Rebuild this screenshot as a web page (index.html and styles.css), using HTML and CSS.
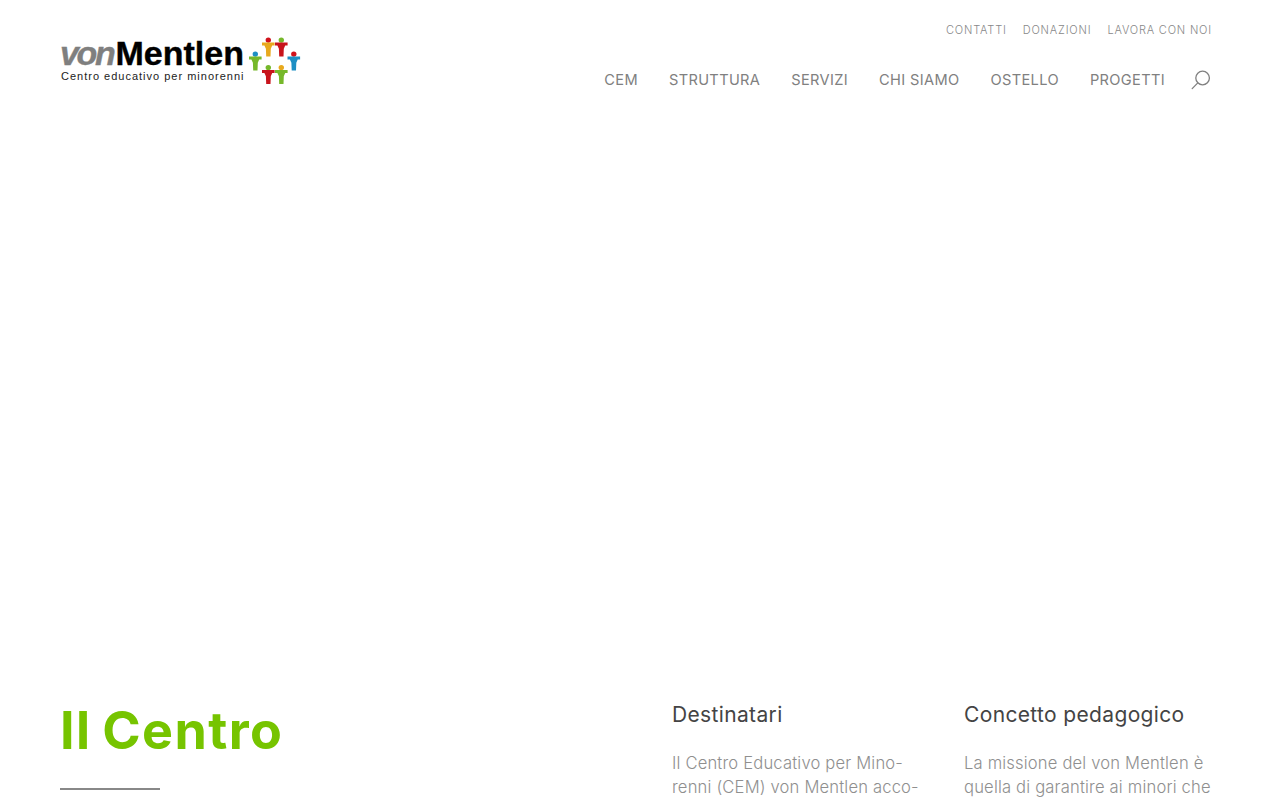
FILE: index.html
```html
<!DOCTYPE html>
<html lang="it">

<head>
    <meta charset="utf-8">
    <title>Centro educativo per minorenni von Mentlen</title>
    <link rel="stylesheet" href="styles.css">
</head>

<body>
    <header class="site-header">
        <a class="logo" href="#">
            <span class="logo-text">
                <span class="logo-name"><span class="logo-von">von</span>Mentlen</span>
                <span class="logo-caption">Centro educativo per minorenni</span>
            </span>
            <svg class="logo-mark" width="52" height="48" viewBox="0 0 52 48">
                <defs>
                    <path id="body" d="M0 5h12.6v3H10.2L8.8 11.2 8.5 19H4.2L3.9 11.2 2.4 8H0z" />
                </defs>
                <g transform="translate(13 1.5)">
                    <circle cx="6.3" cy="2.6" r="2.7" fill="#d0121b" />
                    <use href="#body" fill="#e8a91d" />
                </g>
                <g transform="translate(26 1.5)">
                    <circle cx="6.3" cy="2.6" r="2.7" fill="#76b82a" />
                    <use href="#body" fill="#c8141c" />
                </g>
                <g transform="translate(0 15.5)">
                    <circle cx="6.3" cy="2.6" r="2.7" fill="#1d8fc4" />
                    <use href="#body" fill="#76b82a" />
                </g>
                <g transform="translate(38.5 15.5)">
                    <circle cx="6.3" cy="2.6" r="2.7" fill="#d0121b" />
                    <use href="#body" fill="#1d8fc4" />
                </g>
                <g transform="translate(13 29)">
                    <circle cx="6.3" cy="2.6" r="2.7" fill="#76b82a" />
                    <use href="#body" fill="#c8141c" />
                </g>
                <g transform="translate(26 29)">
                    <circle cx="6.3" cy="2.6" r="2.7" fill="#e8a91d" />
                    <use href="#body" fill="#76b82a" />
                </g>
            </svg>
        </a>

        <div class="header-menus">
            <nav class="top-nav">
                <a href="#">CONTATTI</a>
                <a href="#">DONAZIONI</a>
                <a href="#">LAVORA CON NOI</a>
            </nav>
            <nav class="main-nav">
                <a href="#">CEM</a>
                <a href="#">STRUTTURA</a>
                <a href="#">SERVIZI</a>
                <a href="#">CHI SIAMO</a>
                <a href="#">OSTELLO</a>
                <a href="#">PROGETTI</a>
                <svg class="search-icon" width="20" height="20" viewBox="0 0 20 20" fill="none" stroke="currentColor"
                    stroke-width="1.3" stroke-linecap="round">
                    <circle cx="11.6" cy="8" r="6.8" />
                    <path d="M6.8 12.9L1.2 18.6" />
                </svg>
            </nav>
        </div>
    </header>

    <main class="intro">
        <div class="intro-title">
            <h1>Il Centro</h1>
            <div class="title-rule"></div>
        </div>
        <section class="intro-col">
            <h3>Destinatari</h3>
            <p>Il Centro Educativo per Mino-<br>renni (CEM) von Mentlen acco-</p>
        </section>
        <section class="intro-col">
            <h3>Concetto pedagogico</h3>
            <p>La missione del von Mentlen è<br>quella di garantire ai minori che</p>
        </section>
    </main>
</body>

</html>
```

FILE: styles.css
```css
html,
body {
    height: 800px;
    overflow: hidden;
}

body {
    font-family: Inter, "Open Sans", sans-serif;
    margin: 0;
    background-color: white;
    color: #808080;
}

a {
    color: inherit;
    text-decoration: none;
}

.site-header {
    display: flex;
    justify-content: space-between;
    height: 674px;
    padding: 0 68px 0 60px;
}

.logo {
    display: flex;
    align-items: flex-start;
    gap: 5px;
    margin-top: 36px;
}

.logo-text {
    display: flex;
    flex-direction: column;
    width: 184px;
    font-family: "Liberation Sans", Arial, sans-serif;
}

.logo-name {
    margin-top: 1px;
    color: black;
    font-size: 34px;
    font-weight: bold;
    line-height: 33px;
    -webkit-text-stroke: 0.4px currentColor;
}

.logo-von {
    color: #7f7f7f;
    font-style: italic;
    letter-spacing: -2.3px;
    margin-right: 2px;
}

.logo-caption {
    margin-left: 1px;
    color: #222;
    font-size: 11px;
    line-height: 12px;
    letter-spacing: 1px;
    white-space: nowrap;
}

.header-menus {
    display: flex;
    flex-direction: column;
    align-items: flex-end;
}

.top-nav {
    display: flex;
    gap: 16px;
    margin-top: 23px;
    color: #888;
    font-size: 11px;
    font-weight: 300;
    line-height: 14px;
    letter-spacing: 0.82px;
}

.main-nav {
    display: flex;
    align-items: center;
    gap: 31px;
    margin-top: 30px;
    margin-right: 1px;
    font-size: 14.6px;
    line-height: 26px;
    letter-spacing: 0.35px;
}

.search-icon {
    margin-left: -5px;
}

.intro {
    display: grid;
    grid-template-columns: 612px 292px 1fr;
    padding: 0 60px;
}

.intro-title h1 {
    margin: 22px 0 0;
    color: #76c400;
    font-size: 52px;
    font-weight: 700;
    line-height: 70px;
    letter-spacing: 1.4px;
    word-spacing: -3px;
}

.title-rule {
    width: 100px;
    height: 2px;
    margin-top: 22px;
    background-color: #888;
}

.intro-col h3 {
    margin: 27px 0 0;
    color: #444;
    font-size: 21px;
    font-weight: 400;
    line-height: 28px;
    letter-spacing: 0.35px;
}

.intro-col p {
    margin: 22px 0 0;
    color: #8f8f8f;
    font-size: 16.6px;
    font-weight: 300;
    line-height: 24px;
    letter-spacing: 0.17px;
    white-space: nowrap;
}
```
